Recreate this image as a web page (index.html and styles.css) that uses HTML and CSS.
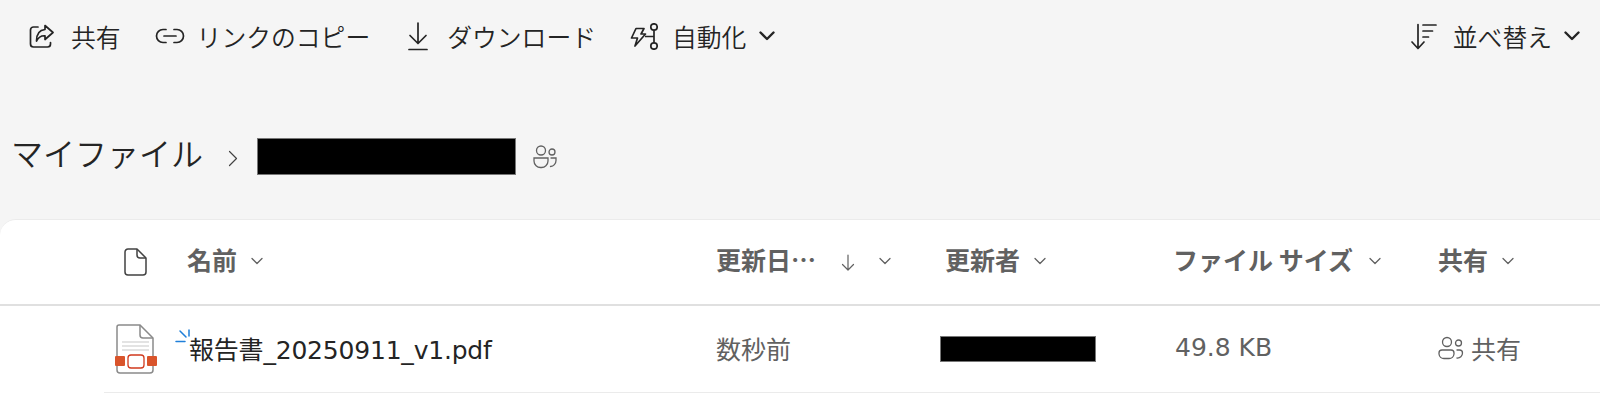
FILE: index.html
```html
<!DOCTYPE html>
<html lang="ja">
<head>
    <meta charset="UTF-8">
    <meta name="viewport" content="width=device-width, initial-scale=1.0">
    <title>マイファイル</title>
    <link rel="stylesheet" href="styles.css">
</head>
<body>
    <div class="toolbar">
        <div class="toolbar-group">
            <button type="button" class="tool-button tool-share">
                <svg class="tool-icon" width="26" height="26" viewBox="0 0 26 26" fill="none" stroke="#242424" stroke-width="1.700" stroke-linejoin="round" stroke-linecap="round">
                    <path d="M10 4H5.500A3 3 0 0 0 2.500 7V21A3 3 0 0 0 5.500 24H19.500A3 3 0 0 0 22.500 21V19.500"/>
                    <path d="M17 2.500L25 9.500L17 16.500V12.800C13 12.500 10.500 14 8.500 18C8.500 11.500 11.500 7 17 6.500Z"/>
                </svg>
                <span>共有</span>
            </button>
            <button type="button" class="tool-button tool-link">
                <svg class="tool-icon" width="30" height="16" viewBox="0 0 30 16" fill="none" stroke="#242424" stroke-width="1.700" stroke-linecap="round">
                    <path d="M11 1.500H8A6.500 6.500 0 0 0 8 14.500H11"/>
                    <path d="M19 1.500H22A6.500 6.500 0 0 1 22 14.500H19"/>
                    <path d="M9 8H21"/>
                </svg>
                <span>リンクのコピー</span>
            </button>
            <button type="button" class="tool-button tool-download">
                <svg class="tool-icon" width="20" height="29" viewBox="0 0 20 29" fill="none" stroke="#242424" stroke-width="1.700" stroke-linecap="round" stroke-linejoin="round">
                    <path d="M10 1V21M2 13.500L10 21.500L18 13.500"/>
                    <path d="M1 27.500H19"/>
                </svg>
                <span>ダウンロード</span>
            </button>
            <button type="button" class="tool-button tool-auto">
                <svg class="tool-icon" width="28" height="27" viewBox="0 0 28 27" fill="none" stroke="#242424" stroke-width="1.700" stroke-linejoin="round">
                    <path d="M6 5.500H14L11 11H15.500L5 23L7.500 15H1.500Z"/>
                    <circle cx="24" cy="4" r="3.200"/>
                    <circle cx="24" cy="23" r="3.200"/>
                    <path d="M24 7.200V19.800M24 13.500H15"/>
                </svg>
                <span>自動化</span>
                <svg class="caret" width="16" height="10" viewBox="0 0 16 10" fill="none" stroke="#242424" stroke-width="2.400" stroke-linecap="round" stroke-linejoin="round">
                    <path d="M1.500 1.500L8 8L14.500 1.500"/>
                </svg>
            </button>
        </div>
        <button type="button" class="tool-button tool-sort">
            <svg class="tool-icon" width="26" height="27" viewBox="0 0 26 27" fill="none" stroke="#242424" stroke-width="1.700" stroke-linecap="round" stroke-linejoin="round">
                <path d="M7 1.500V25M1 19L7 25.500L13 19"/>
                <path d="M12 2H25M12 8H21.500M12 14H17.500"/>
            </svg>
            <span>並べ替え</span>
            <svg class="caret" width="16" height="10" viewBox="0 0 16 10" fill="none" stroke="#242424" stroke-width="2.400" stroke-linecap="round" stroke-linejoin="round">
                <path d="M1.500 1.500L8 8L14.500 1.500"/>
            </svg>
        </button>
    </div>

    <div class="breadcrumb">
        <span class="crumb-root">マイファイル</span>
        <svg class="crumb-sep" width="10" height="17" viewBox="0 0 10 17" fill="none" stroke="#424242" stroke-width="1.200" stroke-linecap="round" stroke-linejoin="round">
            <path d="M1.500 1.500L8.500 8.500L1.500 15.500"/>
        </svg>
        <div class="redacted crumb-name"></div>
        <svg class="crumb-people" width="24" height="24" viewBox="0 0 24 24" fill="none" stroke="#616161" stroke-width="1.300" stroke-linecap="round">
            <circle cx="8" cy="5.500" r="4.500"/>
            <circle cx="19" cy="7" r="3"/>
            <path d="M1 13H15V16A6.500 6.500 0 0 1 8 22.500A6.500 6.500 0 0 1 1 16Z"/>
            <path d="M18 13H23V15.500A6 6 0 0 1 17.500 21.500"/>
        </svg>
    </div>

    <div class="list-panel">
        <div class="list-row list-head">
            <div class="cell-icon">
                <svg width="23" height="28" viewBox="0 0 23 28" fill="none" stroke="#424242" stroke-width="1.500" stroke-linejoin="round">
                    <path d="M4 1H13L22 10V24A3 3 0 0 1 19 27H4A3 3 0 0 1 1 24V4A3 3 0 0 1 4 1Z"/>
                    <path d="M13 1V7A3 3 0 0 0 16 10H22"/>
                </svg>
            </div>
            <div class="head-cell">名前<svg class="head-caret" width="12" height="8" viewBox="0 0 12 8" fill="none" stroke="#616161" stroke-width="1.300" stroke-linecap="round" stroke-linejoin="round"><path d="M1 1.500L6 6.500L11 1.500"/></svg></div>
            <div class="head-cell">更新日…<svg class="head-arrow" width="14" height="17" viewBox="0 0 14 17" fill="none" stroke="#616161" stroke-width="1.200" stroke-linecap="round" stroke-linejoin="round"><path d="M7 1V16M1.500 10.500L7 16L12.500 10.500"/></svg><svg class="head-caret-sorted" width="12" height="8" viewBox="0 0 12 8" fill="none" stroke="#616161" stroke-width="1.300" stroke-linecap="round" stroke-linejoin="round"><path d="M1 1.500L6 6.500L11 1.500"/></svg></div>
            <div class="head-cell">更新者<svg class="head-caret" width="12" height="8" viewBox="0 0 12 8" fill="none" stroke="#616161" stroke-width="1.300" stroke-linecap="round" stroke-linejoin="round"><path d="M1 1.500L6 6.500L11 1.500"/></svg></div>
            <div class="head-cell head-size">ファイル サイズ<svg class="head-caret" width="12" height="8" viewBox="0 0 12 8" fill="none" stroke="#616161" stroke-width="1.300" stroke-linecap="round" stroke-linejoin="round"><path d="M1 1.500L6 6.500L11 1.500"/></svg></div>
            <div class="head-cell">共有<svg class="head-caret" width="12" height="8" viewBox="0 0 12 8" fill="none" stroke="#616161" stroke-width="1.300" stroke-linecap="round" stroke-linejoin="round"><path d="M1 1.500L6 6.500L11 1.500"/></svg></div>
        </div>
        <div class="list-row file-row">
            <div class="cell-icon">
                <svg width="42" height="50" viewBox="0 0 42 50" fill="none">
                    <path d="M4 1H25L38 14V46A3 3 0 0 1 35 49H5A3 3 0 0 1 2 46V3A2 2 0 0 1 4 1Z" fill="#fff" stroke="#8a8a8a" stroke-width="1.500"/>
                    <path d="M25 1V11A3 3 0 0 0 28 14H38" stroke="#8a8a8a" stroke-width="1.500"/>
                    <path d="M7 18H34M7 22H34M7 26H34" stroke="#c8c8c8" stroke-width="1.200"/>
                    <rect x="0" y="32" width="10" height="10" rx="1" fill="#d9542b"/>
                    <rect x="32" y="32" width="10" height="10" rx="1" fill="#d9542b"/>
                    <rect x="13" y="31" width="16" height="13" rx="3" fill="#fff" stroke="#d13a1e" stroke-width="1.300"/>
                </svg>
            </div>
            <div class="file-name">
                <svg class="new-mark" width="16" height="14" viewBox="0 0 16 14" fill="none" stroke="#1f7fd9" stroke-width="1.500" stroke-linecap="round">
                    <path d="M14 1V7M5 2L11 8M1 12.500H10"/>
                </svg>
                <span>報告書_20250911_v1.pdf</span>
            </div>
            <div class="cell-text">数秒前</div>
            <div class="cell-text cell-redacted"><div class="redacted row-name"></div></div>
            <div class="cell-text">49.8 KB</div>
            <div class="cell-text cell-shared">
                <svg width="26" height="24" viewBox="0 0 26 24" fill="none" stroke="#616161" stroke-width="1.300" stroke-linecap="round">
                    <circle cx="9" cy="6" r="4.500"/>
                    <circle cx="20.500" cy="7" r="3"/>
                    <path d="M1 17A3 3 0 0 1 4 14H13A3 3 0 0 1 16 17V18A5 5 0 0 1 11 22.500H6A5 5 0 0 1 1 18Z"/>
                    <path d="M19 14H21.500A3 3 0 0 1 24.500 17A5 5 0 0 1 19 22"/>
                </svg>
                <span>共有</span>
            </div>
        </div>
    </div>
</body>
</html>
```

FILE: styles.css
```css
* {
    margin: 0;
    padding: 0;
    box-sizing: border-box;
}

html, body {
    height: 100%;
    overflow: hidden;
}

body {
    font-family: "DejaVu Sans", "Noto Sans CJK JP", sans-serif;
    background: #f5f5f5;
    color: #242424;
    display: flex;
    flex-direction: column;
}

.toolbar {
    height: 76px;
    display: flex;
    justify-content: space-between;
    align-items: center;
    padding: 0 20px 4px 28px;
}

.toolbar-group {
    display: flex;
    align-items: center;
}

.tool-button {
    display: flex;
    align-items: center;
    border: none;
    background: none;
    font-family: "Noto Sans CJK JP", sans-serif;
    font-size: 24.8px;
    font-weight: 350;
    color: #242424;
    white-space: nowrap;
}

.tool-icon {
    flex: none;
}

.tool-share {
    gap: 17px;
    margin-right: 34px;
}

.tool-link {
    gap: 12px;
    margin-right: 38px;
}

.tool-download {
    gap: 19px;
    margin-right: 34px;
}

.tool-auto {
    gap: 14px;
}

.tool-sort {
    gap: 16px;
}

.caret {
    margin-left: -1px;
}

.tool-sort .caret {
    margin-left: -4px;
}

.breadcrumb {
    height: 143px;
    display: flex;
    align-items: center;
    padding: 8px 0 0 11px;
}

.crumb-root {
    font-family: "Noto Sans CJK JP", sans-serif;
    font-size: 32px;
    font-weight: 350;
}

.crumb-sep {
    margin-left: 25px;
    margin-top: 14px;
}

.redacted {
    background: #000;
    border: 1px solid #777;
}

.crumb-name {
    width: 259px;
    height: 37px;
    margin-left: 19px;
    margin-top: 10px;
}

.crumb-people {
    margin-left: 17px;
    margin-top: 10px;
}

.list-panel {
    flex: 1;
    background: #fff;
    border-top: 1px solid #ebebeb;
    border-radius: 16px 0 0 0;
}

.list-row {
    display: grid;
    grid-template-columns: 83px 529px 229px 230px 263px 1fr;
    align-items: center;
    margin-left: 104px;
}

.list-head {
    height: 86px;
    margin-left: 0;
    padding-left: 104px;
    border-bottom: 2px solid #e0e0e0;
}

.file-row {
    height: 87px;
    border-bottom: 1px solid #ebebeb;
}

.cell-icon {
    display: flex;
    justify-content: flex-start;
}

.list-head .cell-icon {
    padding-left: 20px;
}

.file-row .cell-icon {
    padding-left: 11px;
}

.head-cell {
    display: flex;
    align-items: center;
    font-family: "Noto Sans CJK JP", sans-serif;
    font-size: 25px;
    font-weight: 700;
    color: #616161;
    white-space: nowrap;
    padding-bottom: 6px;
}

.head-size {
    margin-left: -2px;
}

.head-caret {
    margin-left: 14px;
    margin-top: 4px;
}

.head-size .head-caret {
    margin-left: 16px;
}

.head-arrow {
    margin-left: 25px;
    margin-top: 6px;
}

.head-caret-sorted {
    margin-left: 24px;
    margin-top: 4px;
}

.file-name {
    position: relative;
    font-size: 25px;
    letter-spacing: -0.2px;
    color: #242424;
    white-space: nowrap;
    padding: 0 0 3px 2px;
}

.new-mark {
    position: absolute;
    left: -12px;
    top: -1px;
}

.cell-text {
    font-size: 25px;
    color: #616161;
    white-space: nowrap;
    padding-bottom: 3px;
}

.cell-redacted {
    padding-bottom: 0;
}

.row-name {
    width: 156px;
    height: 26px;
    margin-left: -5px;
}

.cell-shared {
    display: flex;
    align-items: center;
    gap: 7px;
}
```
